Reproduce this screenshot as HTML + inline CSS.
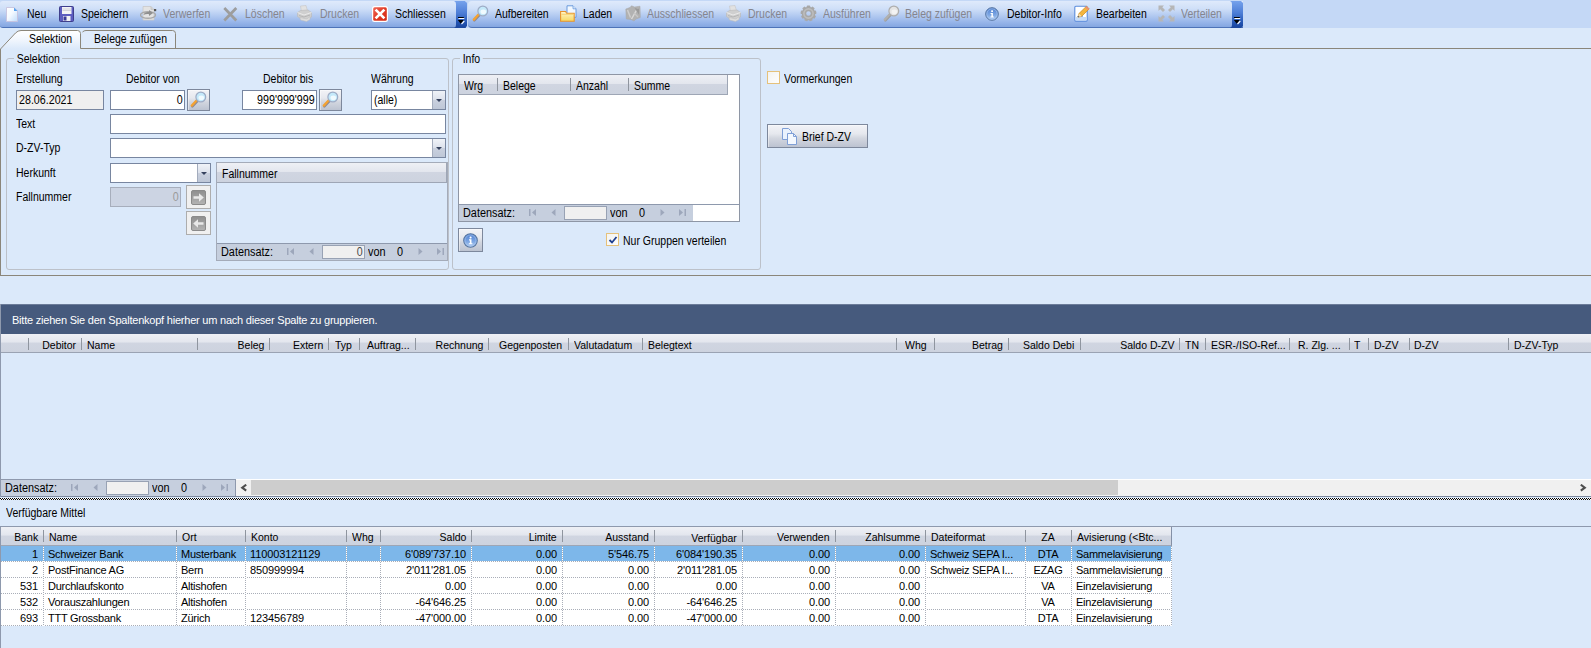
<!DOCTYPE html>
<html lang="de"><head><meta charset="utf-8"><title>Debitoren Zahlungsverkehr</title>
<style>
*{box-sizing:border-box;margin:0;padding:0}
html,body{width:1591px;height:648px;overflow:hidden}
body{background:#dbe9fa;font-family:"Liberation Sans",sans-serif;font-size:12px;color:#000;position:relative;line-height:13px}
span{transform:scaleX(.875);transform-origin:0 0}
span.n{transform:scaleX(.89)}
span.xr{transform-origin:100% 0}
span.xc{transform-origin:50% 0}
.inp span,.ni span{display:inline-block}
.hd span{font-size:11.5px;transform:scaleX(.913)}
.hd span.h12{font-size:12px;transform:scaleX(.875)}
.nav span.t{transform:scaleX(.905)}
span.p{font-size:11px;transform:none;letter-spacing:-.25px}
span.p.n{letter-spacing:-.12px;transform:none}
.a{position:absolute;white-space:nowrap}
.tb{position:absolute;top:0;height:28px;border-bottom:1px solid #4d73b8;border-top:1px solid #c4d8f6;background:linear-gradient(#dfeafb 0%,#cfdff8 30%,#b4cbf1 55%,#93b2e8 85%,#84a6e0 100%);border-radius:3px 0 0 3px}
.tb .t{position:absolute;top:7px;white-space:nowrap}
.tb .d{color:#85858e}
.tb svg{position:absolute}
.ov{position:absolute;top:1px;height:27px;width:11px;background:linear-gradient(#74a0ea 0%,#4f7fd4 45%,#2556b0 80%,#1b469c 100%);border-radius:0 3px 3px 0}
.inp{position:absolute;height:20px;border:1px solid #7886a0;background:#fff;padding:3px 1px 0 2px;white-space:nowrap}
.ro{background:#efefef}
.r{text-align:right}
.btn{position:absolute;border:1px solid #7d889c;background:linear-gradient(#f2f3f7 0%,#e6e8ee 40%,#d2d6df 60%,#bcc3d1 100%);box-shadow:inset 1px 1px 0 rgba(255,255,255,.45)}
.cbtn{position:absolute;right:0;top:0;bottom:0;width:13px;border-left:1px solid #a3acbd;background:linear-gradient(#f0f3f8 0%,#dde2ec 48%,#c9d0de 52%,#bec7d7 100%)}
.cbtn:after{content:"";position:absolute;left:3px;top:8px;border:3px solid transparent;border-top:3px solid #36425e;border-bottom:none}
.gb{position:absolute;border:1px solid #bcc1c9;border-radius:3px}
.gb>span{position:absolute;left:7px;top:-6px;background:#dbe9fa;padding:0 3px}
.hd{position:absolute;background:linear-gradient(#eef0f5 0%,#e3e6ee 45%,#d0d5e1 50%,#cdd3df 100%);border-bottom:1px solid #9ea6b5}
.hd .c{position:absolute;top:0;white-space:nowrap}
.sep{position:absolute;width:1px;background:#8f959f}
.nav{position:absolute;background:#c6cfde;height:17px;border-top:1px solid #8e99ad}
.nav .t{position:absolute;top:2px;white-space:nowrap}
.nav .ni{position:absolute;top:1px;height:14px;border:1px solid #98a2b4;background:#f0f0f0}
.g{fill:#9da7bb}
.row{position:absolute;left:0;width:1171px;height:16px;background:#fff}
.row .c{position:absolute;top:2px;white-space:nowrap}
.fbtn{position:absolute;border:1px solid #adadad;background:#f0f0f0}
.cb{position:absolute;width:13px;height:13px;border:1px solid #e5c17b;background:linear-gradient(135deg,#f3f3f1,#fdfdfd)}
</style></head><body>

<div class="a" style="left:0;top:0;width:1591px;height:28px;background:#c4d8f6"></div>
<div class="tb" style="left:0;width:466px">
<svg style="left:5px;top:5px" width="14" height="16" viewBox="0 0 14 16"><defs><linearGradient id="gn" x1="0" y1="0" x2="1" y2="1"><stop offset="0" stop-color="#fff"/><stop offset=".45" stop-color="#f4f9ff"/><stop offset="1" stop-color="#bfdcfb"/></linearGradient></defs><path d="M1.500 1.500h7.500l3.500 3.500v10.500h-11z" fill="url(#gn)" stroke="#c6c2de" stroke-width=".9"/><path d="M9 1.500l3.500 3.500h-3.500z" fill="#58a2ee"/></svg>
<span class="t" style="left:27px">Neu</span>
<svg style="left:59px;top:4px" width="16" height="17" viewBox="0 0 16 17"><rect x=".5" y="1.500" width="14" height="15" rx="1" fill="#5c5cc0" stroke="#3f3f8c"/><rect x="3" y="2" width="9.500" height="7" fill="#f3f3f6"/><path d="M3.500 4h8.500M3.500 5.500h8.500" stroke="#c9c9d6" stroke-width=".8"/><rect x="4" y="11" width="7.500" height="5" fill="#f0f0f5"/><rect x="4.500" y="11.500" width="3" height="4" fill="#3a3a98"/></svg>
<span class="t" style="left:81px">Speichern</span>
<svg style="left:140px;top:4px" width="17" height="16" viewBox="0 0 17 16"><path d="M3 1.500h8l3 3v10.500h-11z" fill="#e3e3e3" stroke="#c9c9c9" stroke-width=".8"/><path d="M11 1.500v3h3" fill="#d2d2d2" stroke="#bdbdbd" stroke-width=".6"/><ellipse cx="8" cy="10" rx="7.500" ry="3.300" fill="none" stroke="#a9a9a9" stroke-width="1.400"/><path d="M3.500 10c.5-2.500 3-3.500 5.500-3V5l4 3-4 3V9.200c-2-.5-4 0-5.500 .8z" fill="#8f8f8f"/><rect x="14" y="4" width="2.200" height="2.200" fill="#555"/></svg>
<span class="t d" style="left:163px">Verwerfen</span>
<svg style="left:223px;top:6px" width="15" height="15" viewBox="0 0 15 15"><path d="M1.300 1l12 12.500M13.300 1L1.300 13.500" stroke="#9d9d9d" stroke-width="2.700"/></svg>
<span class="t d" style="left:245px">Löschen</span>
<svg style="left:297px;top:4px" width="15" height="17" viewBox="0 0 15 17"><path d="M3.500 1l5.500-.5 1.500 5.500-6 1z" fill="#e2e2e2" stroke="#c6c6c6" stroke-width=".6"/><path d="M.5 7.500l3-2 7.500-.5 3.500 2.500v4.500l-4 3-7-1.500-3-2z" fill="#cfcfcf" stroke="#b9b9b9" stroke-width=".6"/><path d="M.5 7.500l6.500 2.500 7.500-2.500" fill="none" stroke="#e9e9e9" stroke-width="1"/><path d="M3 12.500l7 1.500 3-2.500v3l-3.500 2-6-1.500z" fill="#dcdcdc" stroke="#bdbdbd" stroke-width=".5"/><path d="M2 10.500l5 1.500 6-2" fill="none" stroke="#b0b0b0" stroke-width=".8"/></svg>
<span class="t d" style="left:320px">Drucken</span>
<svg style="left:372px;top:5px" width="16" height="16" viewBox="0 0 16 16"><defs><linearGradient id="gc" x1="0" y1="0" x2="1" y2="1"><stop offset="0" stop-color="#f0685a"/><stop offset=".5" stop-color="#e03a26"/><stop offset="1" stop-color="#d42a12"/></linearGradient></defs><rect x="0" y="0" width="16" height="16" rx="2.500" fill="#fff"/><rect x="1.200" y="1.200" width="13.600" height="13.600" rx="1.500" fill="url(#gc)"/><path d="M3.600 3.600l8.800 8.800M12.400 3.600l-8.800 8.800" stroke="#fff" stroke-width="2.700"/></svg>
<span class="t" style="left:395px">Schliessen</span>
</div><svg class="a" style="left:454px;top:1px" width="13" height="27" viewBox="0 0 13 27"><defs><linearGradient id="go454" x1="0" y1="0" x2="0" y2="1"><stop offset="0" stop-color="#76a2ec"/><stop offset=".45" stop-color="#4c7dd6"/><stop offset=".8" stop-color="#2354b2"/><stop offset="1" stop-color="#1a459c"/></linearGradient></defs><path d="M0 0Q2 .5 2 3V24Q2 26.500 0 27H11L13 25V2L11 0Z" fill="url(#go454)"/><path d="M4 16.500h5.800" stroke="#000" stroke-width="1"/><path d="M4.500 17.500h5.800" stroke="#fff" stroke-width="1"/><path d="M3.800 19h6l-3 3.800z" fill="#000"/><path d="M7.500 23l2.800-3" stroke="#fff" stroke-width="1.100"/></svg>
<div class="tb" style="left:468px;width:775px;border-radius:4px 0 0 4px">
<svg style="left:4px;top:4px" width="17" height="17" viewBox="0 0 17 17"><path d="M2.300 15.300l5-5.300" stroke="#8a8794" stroke-width="2.600" stroke-linecap="round"/><path d="M1.800 14.600l5-5.300" stroke="#f3a233" stroke-width="2.400" stroke-linecap="round"/><circle cx="10.800" cy="6" r="4.900" fill="#c4e9fa" stroke="#9eacc6" stroke-width="1.200"/><ellipse cx="11.300" cy="6.800" rx="2.800" ry="2.300" fill="#ffffff" opacity=".75"/></svg>
<span class="t" style="left:27px">Aufbereiten</span>
<svg style="left:92px;top:4px" width="17" height="17" viewBox="0 0 17 17"><defs><linearGradient id="gf" x1="0" y1="0" x2="0" y2="1"><stop offset="0" stop-color="#fff7cf"/><stop offset="1" stop-color="#f7d75e"/></linearGradient></defs><path d="M7 .8h6l3 3v8.500h-9z" fill="#f2f8ff" stroke="#5e92da" stroke-width=".9"/><path d="M13 .8v3h3" fill="#dbeafc" stroke="#5e92da" stroke-width=".7"/><path d="M.6 6.500h5l1 1.800h7.600v8h-13.600z" fill="url(#gf)" stroke="#e8942c" stroke-width="1.100"/><path d="M1.500 9.300h12" stroke="#f5c860" stroke-width=".8"/></svg>
<span class="t" style="left:115px">Laden</span>
<svg style="left:157px;top:4px" width="16" height="17" viewBox="0 0 16 17"><path d="M.8 4l4.200-1.500 1.500-1.700 3 1.200 5.500-.8.300 11.300-4.300 1.500-2 2-3-1.500-4.700-.5z" fill="#b2b2b2" stroke="#a6a6a6" stroke-width=".5"/><path d="M2.500 5l3 7.500" stroke="#cfcfcf" stroke-width="1.400"/><path d="M12.500 3.500L6.500 14" stroke="#d8d8d8" stroke-width="1.500"/><path d="M9.500 3l4.500 .8v6z" fill="#9a9a9a"/><path d="M9 8l4 4" stroke="#c6c6c6" stroke-width="1.200"/></svg>
<span class="t d" style="left:179px">Ausschliessen</span>
<svg style="left:258px;top:4px" width="15" height="17" viewBox="0 0 15 17"><path d="M3.500 1l5.500-.5 1.500 5.500-6 1z" fill="#e2e2e2" stroke="#c6c6c6" stroke-width=".6"/><path d="M.5 7.500l3-2 7.500-.5 3.500 2.500v4.500l-4 3-7-1.500-3-2z" fill="#cfcfcf" stroke="#b9b9b9" stroke-width=".6"/><path d="M.5 7.500l6.500 2.500 7.500-2.500" fill="none" stroke="#e9e9e9" stroke-width="1"/><path d="M3 12.500l7 1.500 3-2.500v3l-3.500 2-6-1.500z" fill="#dcdcdc" stroke="#bdbdbd" stroke-width=".5"/><path d="M2 10.500l5 1.500 6-2" fill="none" stroke="#b0b0b0" stroke-width=".8"/></svg>
<span class="t d" style="left:280px">Drucken</span>
<svg style="left:332px;top:4px" width="17" height="17" viewBox="0 0 17 17"><g fill="#a9a9a9"><rect x="6.800" y="0.600" width="3.400" height="3.400" rx=".7" transform="rotate(0 8.500 8.500)"/><rect x="6.800" y="0.600" width="3.400" height="3.400" rx=".7" transform="rotate(40 8.500 8.500)"/><rect x="6.800" y="0.600" width="3.400" height="3.400" rx=".7" transform="rotate(80 8.500 8.500)"/><rect x="6.800" y="0.600" width="3.400" height="3.400" rx=".7" transform="rotate(120 8.500 8.500)"/><rect x="6.800" y="0.600" width="3.400" height="3.400" rx=".7" transform="rotate(160 8.500 8.500)"/><rect x="6.800" y="0.600" width="3.400" height="3.400" rx=".7" transform="rotate(200 8.500 8.500)"/><rect x="6.800" y="0.600" width="3.400" height="3.400" rx=".7" transform="rotate(240 8.500 8.500)"/><rect x="6.800" y="0.600" width="3.400" height="3.400" rx=".7" transform="rotate(280 8.500 8.500)"/><rect x="6.800" y="0.600" width="3.400" height="3.400" rx=".7" transform="rotate(320 8.500 8.500)"/></g><circle cx="8.500" cy="8.500" r="4.500" fill="none" stroke="#a8a8a8" stroke-width="4.400"/><circle cx="8.500" cy="8.500" r="4.600" fill="none" stroke="#bdbdbd" stroke-width="1.600"/></svg>
<span class="t d" style="left:355px">Ausführen</span>
<svg style="left:415px;top:4px" width="17" height="17" viewBox="0 0 17 17"><path d="M2.300 15.300l5-5.300" stroke="#9c9c9c" stroke-width="2.600" stroke-linecap="round"/><path d="M1.800 14.600l5-5.300" stroke="#b0b0b0" stroke-width="2.400" stroke-linecap="round"/><circle cx="10.800" cy="6" r="4.900" fill="#e4e4e4" stroke="#adadad" stroke-width="1.200"/><ellipse cx="11.300" cy="6.800" rx="2.800" ry="2.300" fill="#f8f8f8" opacity=".75"/></svg>
<span class="t d" style="left:437px">Beleg zufügen</span>
<svg style="left:517px;top:6px;width:14px;height:14px" width="17" height="17" viewBox="0 0 17 17"><defs><linearGradient id="gi" x1="0" y1="0" x2="0" y2="1"><stop offset="0" stop-color="#4f7fcf"/><stop offset=".55" stop-color="#7aa4e2"/><stop offset="1" stop-color="#b5d0f3"/></linearGradient></defs><circle cx="8.500" cy="8.500" r="7.700" fill="url(#gi)" stroke="#55749f" stroke-width="1.200"/><circle cx="8.500" cy="8.500" r="6.300" fill="none" stroke="#a9c6ee" stroke-width=".9" opacity=".8"/><path d="M6.800 7.200h2.800v4.300h1.100v1.300h-4.100v-1.300h1.200v-3h-1z" fill="#fff"/><rect x="7.500" y="3.900" width="2.200" height="2.200" rx=".7" fill="#fff"/></svg>
<span class="t" style="left:539px">Debitor-Info</span>
<svg style="left:606px;top:4px" width="17" height="17" viewBox="0 0 17 17"><rect x=".8" y="1.300" width="12.400" height="14.800" rx="1" fill="#fff" stroke="#5b8cdc" stroke-width="1.100"/><rect x="1.500" y="12" width="11" height="3.500" fill="#c6dcf8"/><path d="M3 11.500h6" stroke="#8fb4ea" stroke-width="1"/><path d="M4 12.200l.9-3.600 7.600-7.400 2.700 2.700-7.500 7.400z" fill="#f4b63e" stroke="#c9861c" stroke-width=".7"/><path d="M12.500 1.200l2.700 2.700-1.200 1.200-2.700-2.700z" fill="#e98a7e"/><path d="M4 12.200l.9-3.600 2.800 2.700z" fill="#f3dfb6"/><path d="M4 12.200l.4-1.500 1.100 1.100z" fill="#444"/></svg>
<span class="t" style="left:628px">Bearbeiten</span>
<svg style="left:690px;top:4px" width="17" height="17" viewBox="0 0 17 17" fill="#b6b6b6"><path d="M.5 .5h5.500L4.300 2.200 7 5 5 7 2.200 4.300 .5 6z"/><path d="M16.500 .5v5.500l-1.700-1.700L12 7l-2-2 2.800-2.800L11 .5z"/><path d="M.5 16.500v-5.500l1.700 1.700L5 10l2 2-2.800 2.800L6 16.500z"/><path d="M16.500 16.500h-5.500l1.700-1.700L10 12l2-2 2.800 2.800 1.700-1.800z"/></svg>
<span class="t d" style="left:713px">Verteilen</span>
</div><svg class="a" style="left:1230px;top:1px" width="13" height="27" viewBox="0 0 13 27"><defs><linearGradient id="go1230" x1="0" y1="0" x2="0" y2="1"><stop offset="0" stop-color="#76a2ec"/><stop offset=".45" stop-color="#4c7dd6"/><stop offset=".8" stop-color="#2354b2"/><stop offset="1" stop-color="#1a459c"/></linearGradient></defs><path d="M0 0Q2 .5 2 3V24Q2 26.500 0 27H11L13 25V2L11 0Z" fill="url(#go1230)"/><path d="M4 16.500h5.800" stroke="#000" stroke-width="1"/><path d="M4.500 17.500h5.800" stroke="#fff" stroke-width="1"/><path d="M3.800 19h6l-3 3.800z" fill="#000"/><path d="M7.500 23l2.800-3" stroke="#fff" stroke-width="1.100"/></svg>
<svg class="a" style="left:0;top:29px" width="200" height="21" viewBox="0 0 200 21">
<defs><linearGradient id="gt" x1="0" y1="0" x2="0" y2="1"><stop offset="0" stop-color="#fff"/><stop offset=".5" stop-color="#f1f6fd"/><stop offset="1" stop-color="#dbe9fa"/></linearGradient></defs>
<path d="M83 19.500h92.500V4.500q0-3-3-3H86q-2 0-3.500 1.500" fill="#dfebfb" stroke="#8b867a" stroke-width="1"/>
<path d="M0 20L15.500 4q2.500-2.500 5.500-2.500H77.500q3 0 3 3V20z" fill="url(#gt)"/>
<path d="M.5 20L15.500 4q2.500-2.500 5.500-2.500H77.500q3 0 3 3V19.500H200" fill="none" stroke="#8b867a" stroke-width="1"/>
</svg>
<span class="a" style="left:29px;top:33px">Selektion</span><span class="a" style="left:94px;top:33px">Belege zufügen</span>
<div class="a" style="left:0;top:49px;width:1px;height:227px;background:#8b867a"></div>
<div class="a" style="left:180px;top:48px;width:1411px;height:1px;background:#8b867a"></div>
<div class="a" style="left:0;top:275px;width:1591px;height:1px;background:#8b867a"></div>
<div class="gb" style="left:6px;top:58px;width:443px;height:212px"><span>Selektion</span></div>
<div class="gb" style="left:452px;top:58px;width:309px;height:212px"><span>Info</span></div>
<span class="a" style="left:16px;top:73px">Erstellung</span>
<span class="a" style="left:126px;top:73px">Debitor von</span>
<span class="a" style="left:263px;top:73px">Debitor bis</span>
<span class="a" style="left:371px;top:73px">Währung</span>
<span class="a" style="left:16px;top:118px">Text</span>
<span class="a" style="left:16px;top:142px">D-ZV-Typ</span>
<span class="a" style="left:16px;top:167px">Herkunft</span>
<span class="a" style="left:16px;top:191px">Fallnummer</span>
<div class="inp ro" style="left:16px;top:90px;width:88px"><span class="n">28.06.2021</span></div>
<div class="inp r" style="left:110px;top:90px;width:75px"><span class="n xr">0</span></div>
<div class="btn" style="left:187px;top:89px;width:23px;height:22px"><svg style="left:2px;position:absolute;top:1px" width="17" height="17" viewBox="0 0 17 17"><path d="M2.300 15.300l5-5.300" stroke="#8a8794" stroke-width="2.600" stroke-linecap="round"/><path d="M1.800 14.600l5-5.300" stroke="#f3a233" stroke-width="2.400" stroke-linecap="round"/><circle cx="10.800" cy="6" r="4.900" fill="#c4e9fa" stroke="#9eacc6" stroke-width="1.200"/><ellipse cx="11.300" cy="6.800" rx="2.800" ry="2.300" fill="#ffffff" opacity=".75"/></svg></div>
<div class="inp r" style="left:242px;top:90px;width:75px"><span class="n xr">999'999'999</span></div>
<div class="btn" style="left:319px;top:89px;width:23px;height:22px"><svg style="left:2px;position:absolute;top:1px" width="17" height="17" viewBox="0 0 17 17"><path d="M2.300 15.300l5-5.300" stroke="#8a8794" stroke-width="2.600" stroke-linecap="round"/><path d="M1.800 14.600l5-5.300" stroke="#f3a233" stroke-width="2.400" stroke-linecap="round"/><circle cx="10.800" cy="6" r="4.900" fill="#c4e9fa" stroke="#9eacc6" stroke-width="1.200"/><ellipse cx="11.300" cy="6.800" rx="2.800" ry="2.300" fill="#ffffff" opacity=".75"/></svg></div>
<div class="inp" style="left:371px;top:90px;width:75px;padding-left:2px"><span>(alle)</span><div class="cbtn"></div></div>
<div class="inp" style="left:110px;top:114px;width:336px"></div>
<div class="inp" style="left:110px;top:138px;width:336px"><div class="cbtn"></div></div>
<div class="inp" style="left:110px;top:163px;width:101px"><div class="cbtn"></div></div>
<div class="inp r" style="left:110px;top:187px;width:71px;background:#ccd4e3;border-color:#a7aebc;color:#9a9a9a"><span class="n xr">0</span></div>
<div class="fbtn" style="left:186px;top:185px;width:25px;height:24px"><svg class="a" style="left:4px;top:4px" width="15" height="15" viewBox="0 0 15 15"><defs><linearGradient id="ga" x1="0" y1="0" x2="0" y2="1"><stop offset="0" stop-color="#8e8e8e"/><stop offset="1" stop-color="#b4b4b4"/></linearGradient></defs><rect x=".5" y=".5" width="14" height="14" rx="1.500" fill="url(#ga)" stroke="#8b8b8b"/><path d="M2.500 6.300h5.500v-3l4.800 4.200-4.800 4.200v-3h-5.500z" fill="#e9e9e9"/></svg></div>
<div class="fbtn" style="left:186px;top:211px;width:25px;height:24px"><svg class="a" style="left:4px;top:4px" width="15" height="15" viewBox="0 0 15 15"><rect x=".5" y=".5" width="14" height="14" rx="1.500" fill="url(#ga)" stroke="#8b8b8b"/><path d="M12.500 6.300h-5.500v-3l-4.800 4.200 4.800 4.200v-3h5.500z" fill="#e9e9e9"/></svg></div>
<div class="a" style="left:216px;top:162px;width:232px;height:99px;border:1px solid #a4abb9;background:#dbe9fa"></div>
<div class="hd" style="left:217px;top:163px;width:230px;height:20px;border-right:1px solid #9ea6b5"><span class="c h12" style="left:5px;top:5px">Fallnummer</span></div>
<div class="nav" style="left:217px;top:243px;width:230px"><span class="t" style="left:4px">Datensatz:</span><svg class="a" style="left:70px;top:4px" width="8" height="7" viewBox="0 0 8 7"><rect class="g" x="0" y="0" width="1.500" height="7"/><path class="g" d="M7 0v7L3 3.500z"/></svg><svg class="a" style="left:92px;top:4px" width="5" height="7" viewBox="0 0 5 7"><path class="g" d="M4.500 0v7L.5 3.500z"/></svg><div class="ni" style="left:105px;width:43px;text-align:right;color:#4a4a4a;line-height:12px;padding-right:1px"><span class="n xr">0</span></div><span class="t" style="left:151px">von</span><span class="t" style="left:180px">0</span><svg class="a" style="left:201px;top:4px" width="5" height="7" viewBox="0 0 5 7"><path class="g" d="M.5 0v7L4.500 3.500z"/></svg><svg class="a" style="left:219px;top:4px" width="8" height="7" viewBox="0 0 8 7"><path class="g" d="M1 0v7L5 3.500z"/><rect class="g" x="6.500" y="0" width="1.500" height="7"/></svg></div>
<div class="a" style="left:458px;top:74px;width:282px;height:148px;border:1px solid #8e96a5;background:#fff"></div>
<div class="hd" style="left:459px;top:75px;width:269px;height:20px;border-right:1px solid #9ea6b5">
<span class="c h12" style="left:5px;top:5px">Wrg</span>
<span class="c h12" style="left:44px;top:5px">Belege</span>
<span class="c h12" style="left:117px;top:5px">Anzahl</span>
<span class="c h12" style="left:175px;top:5px">Summe</span>
<div class="sep" style="left:38px;top:3px;height:13px"></div>
<div class="sep" style="left:111px;top:3px;height:13px"></div>
<div class="sep" style="left:169px;top:3px;height:13px"></div>
</div>
<div class="a" style="left:459px;top:204px;width:280px;height:1px;background:#8e99ad"></div>
<div class="nav" style="left:459px;top:204px;width:234px"><span class="t" style="left:4px">Datensatz:</span><svg class="a" style="left:70px;top:4px" width="8" height="7" viewBox="0 0 8 7"><rect class="g" x="0" y="0" width="1.500" height="7"/><path class="g" d="M7 0v7L3 3.500z"/></svg><svg class="a" style="left:92px;top:4px" width="5" height="7" viewBox="0 0 5 7"><path class="g" d="M4.500 0v7L.5 3.500z"/></svg><div class="ni" style="left:105px;width:43px;text-align:right;color:#4a4a4a;line-height:12px;padding-right:1px"><span class="n xr"></span></div><span class="t" style="left:151px">von</span><span class="t" style="left:180px">0</span><svg class="a" style="left:201px;top:4px" width="5" height="7" viewBox="0 0 5 7"><path class="g" d="M.5 0v7L4.500 3.500z"/></svg><svg class="a" style="left:219px;top:4px" width="8" height="7" viewBox="0 0 8 7"><path class="g" d="M1 0v7L5 3.500z"/><rect class="g" x="6.500" y="0" width="1.500" height="7"/></svg></div>
<div class="btn" style="left:458px;top:228px;width:25px;height:24px"><svg style="left:4px;position:absolute;top:4px;width:15px;height:15px" width="17" height="17" viewBox="0 0 17 17"><defs><linearGradient id="gi" x1="0" y1="0" x2="0" y2="1"><stop offset="0" stop-color="#4f7fcf"/><stop offset=".55" stop-color="#7aa4e2"/><stop offset="1" stop-color="#b5d0f3"/></linearGradient></defs><circle cx="8.500" cy="8.500" r="7.700" fill="url(#gi)" stroke="#55749f" stroke-width="1.200"/><circle cx="8.500" cy="8.500" r="6.300" fill="none" stroke="#a9c6ee" stroke-width=".9" opacity=".8"/><path d="M6.800 7.200h2.800v4.300h1.100v1.300h-4.100v-1.300h1.200v-3h-1z" fill="#fff"/><rect x="7.500" y="3.900" width="2.200" height="2.200" rx=".7" fill="#fff"/></svg></div>
<div class="cb" style="left:606px;top:233px"><svg class="a" style="left:1px;top:1px" width="10" height="10" viewBox="0 0 10 10"><path d="M1.500 5l2.500 2.500 4.500-5.500" fill="none" stroke="#1f3f8f" stroke-width="1.800"/></svg></div>
<span class="a" style="left:623px;top:235px">Nur Gruppen verteilen</span>
<div class="cb" style="left:767px;top:71px"></div>
<span class="a" style="left:784px;top:73px">Vormerkungen</span>
<div class="btn" style="left:767px;top:124px;width:101px;height:24px"><svg class="a" style="left:13px;top:2px" width="18" height="19" viewBox="0 0 18 19"><path d="M1.500 1.500h6l3 3v8h-9z" fill="#eaf2fd" stroke="#7f9fd6"/><path d="M6.500 6.500h6l3 3v8h-9z" fill="#f4f8fe" stroke="#7f9fd6"/><path d="M12.500 6.500v3h3" fill="none" stroke="#7f9fd6"/></svg><span class="a" style="left:34px;top:6px">Brief D-ZV</span></div>
<div class="a" style="left:0;top:304px;width:1591px;height:30px;background:#465a7d;color:#fff;border-left:1px solid #8e99ad;border-top:1px solid #6c7c99"><span class="a p" style="left:11px;top:9px;letter-spacing:-.22px">Bitte ziehen Sie den Spaltenkopf hierher um nach dieser Spalte zu gruppieren.</span></div>
<div class="hd" style="left:0;top:334px;width:1591px;height:19px;border-bottom:1px solid #9aa3b3">
<div class="sep" style="left:28px;top:4px;height:12px"></div>
<div class="sep" style="left:81px;top:4px;height:12px"></div>
<div class="sep" style="left:197px;top:4px;height:12px"></div>
<div class="sep" style="left:269px;top:4px;height:12px"></div>
<div class="sep" style="left:328px;top:4px;height:12px"></div>
<div class="sep" style="left:359px;top:4px;height:12px"></div>
<div class="sep" style="left:415px;top:4px;height:12px"></div>
<div class="sep" style="left:488px;top:4px;height:12px"></div>
<div class="sep" style="left:568px;top:4px;height:12px"></div>
<div class="sep" style="left:642px;top:4px;height:12px"></div>
<div class="sep" style="left:896px;top:4px;height:12px"></div>
<div class="sep" style="left:934px;top:4px;height:12px"></div>
<div class="sep" style="left:1008px;top:4px;height:12px"></div>
<div class="sep" style="left:1080px;top:4px;height:12px"></div>
<div class="sep" style="left:1179px;top:4px;height:12px"></div>
<div class="sep" style="left:1205px;top:4px;height:12px"></div>
<div class="sep" style="left:1289px;top:4px;height:12px"></div>
<div class="sep" style="left:1349px;top:4px;height:12px"></div>
<div class="sep" style="left:1368px;top:4px;height:12px"></div>
<div class="sep" style="left:1409px;top:4px;height:12px"></div>
<div class="sep" style="left:1508px;top:4px;height:12px"></div>
<span class="c" style="left:87px;top:5px">Name</span>
<span class="c" style="left:335px;top:5px">Typ</span>
<span class="c" style="left:367px;top:5px">Auftrag...</span>
<span class="c" style="left:499px;top:5px">Gegenposten</span>
<span class="c" style="left:574px;top:5px">Valutadatum</span>
<span class="c" style="left:648px;top:5px">Belegtext</span>
<span class="c" style="left:905px;top:5px">Whg</span>
<span class="c" style="left:1185px;top:5px">TN</span>
<span class="c" style="left:1211px;top:5px">ESR-/ISO-Ref...</span>
<span class="c" style="left:1298px;top:5px">R. Zlg. ...</span>
<span class="c" style="left:1354px;top:5px">T</span>
<span class="c" style="left:1374px;top:5px">D-ZV</span>
<span class="c" style="left:1414px;top:5px">D-ZV</span>
<span class="c" style="left:1514px;top:5px">D-ZV-Typ</span>
<span class="c xr" style="right:1515px;top:5px">Debitor</span>
<span class="c xr" style="right:1327px;top:5px">Beleg</span>
<span class="c xr" style="right:1268px;top:5px">Extern</span>
<span class="c xr" style="right:1108px;top:5px">Rechnung</span>
<span class="c xr" style="right:588px;top:5px">Betrag</span>
<span class="c xr" style="right:517px;top:5px">Saldo Debi</span>
<span class="c xr" style="right:417px;top:5px">Saldo D-ZV</span>
</div>
<div class="a" style="left:0;top:304px;width:1px;height:193px;background:#8e99ad;z-index:3"></div>
<div class="nav" style="border-left:1px solid #8e99ad;border-right:1px solid #8e99ad;left:0px;top:479px;width:236px"><span class="t" style="left:4px">Datensatz:</span><svg class="a" style="left:70px;top:4px" width="8" height="7" viewBox="0 0 8 7"><rect class="g" x="0" y="0" width="1.500" height="7"/><path class="g" d="M7 0v7L3 3.500z"/></svg><svg class="a" style="left:92px;top:4px" width="5" height="7" viewBox="0 0 5 7"><path class="g" d="M4.500 0v7L.5 3.500z"/></svg><div class="ni" style="left:105px;width:43px;text-align:right;color:#4a4a4a;line-height:12px;padding-right:1px"><span class="n xr"></span></div><span class="t" style="left:151px">von</span><span class="t" style="left:180px">0</span><svg class="a" style="left:201px;top:4px" width="5" height="7" viewBox="0 0 5 7"><path class="g" d="M.5 0v7L4.500 3.500z"/></svg><svg class="a" style="left:219px;top:4px" width="8" height="7" viewBox="0 0 8 7"><path class="g" d="M1 0v7L5 3.500z"/><rect class="g" x="6.500" y="0" width="1.500" height="7"/></svg></div>
<div class="a" style="left:236px;top:479px;width:1355px;height:17px;background:#f0f0f0;border-top:1px solid #fff"><div class="a" style="left:15px;top:0;width:867px;height:15px;background:#cdcdcd"></div>
<svg class="a" style="left:4px;top:4px" width="8" height="8" viewBox="0 0 8 8"><path d="M6.200 .7L2.200 3.700l4 3" fill="none" stroke="#4d4d4d" stroke-width="2.100"/></svg>
<svg class="a" style="left:1343px;top:4px" width="8" height="8" viewBox="0 0 8 8"><path d="M1.800 .7L5.800 3.700l-4 3" fill="none" stroke="#4d4d4d" stroke-width="2.100"/></svg></div>
<div class="a" style="left:0;top:496px;width:1591px;height:1px;background:#7f8a9e"></div>
<div class="a" style="left:0;top:498px;width:1591px;height:1px;background-image:repeating-linear-gradient(90deg,#000 0 1px,#fff 1px 2px)"></div>
<div class="a" style="left:0;top:499px;width:1591px;height:1px;background-image:repeating-linear-gradient(90deg,#fff 0 1px,#000 1px 2px)"></div>
<span class="a" style="left:6px;top:507px">Verfügbare Mittel</span>
<div class="a" style="left:0;top:526px;width:1591px;height:1px;background:#8e99ad"></div>
<div class="a" style="left:0;top:527px;width:1px;height:121px;background:#8e99ad;z-index:3"></div>
<div class="hd" style="left:0;top:527px;width:1172px;height:19px;border-right:1px solid #8490a6">
<span class="c xr" style="right:1133px;top:4px">Bank</span>
<div class="sep" style="left:43px;top:3px;height:12px"></div>
<span class="c" style="left:48.5px;top:4px">Name</span>
<div class="sep" style="left:176px;top:3px;height:12px"></div>
<span class="c" style="left:181.5px;top:4px">Ort</span>
<div class="sep" style="left:245px;top:3px;height:12px"></div>
<span class="c" style="left:250.5px;top:4px">Konto</span>
<div class="sep" style="left:346px;top:3px;height:12px"></div>
<span class="c" style="left:351.5px;top:4px">Whg</span>
<div class="sep" style="left:380px;top:3px;height:12px"></div>
<span class="c xr" style="right:705px;top:4px">Saldo</span>
<div class="sep" style="left:471px;top:3px;height:12px"></div>
<span class="c xr" style="right:614px;top:4px">Limite</span>
<div class="sep" style="left:562px;top:3px;height:12px"></div>
<span class="c xr" style="right:522px;top:4px">Ausstand</span>
<div class="sep" style="left:654px;top:3px;height:12px"></div>
<span class="c xr" style="right:434px;top:5px">Verfügbar</span>
<div class="sep" style="left:742px;top:3px;height:12px"></div>
<span class="c xr" style="right:341px;top:4px">Verwenden</span>
<div class="sep" style="left:835px;top:3px;height:12px"></div>
<span class="c xr" style="right:251px;top:4px">Zahlsumme</span>
<div class="sep" style="left:925px;top:3px;height:12px"></div>
<span class="c" style="left:930.5px;top:4px">Dateiformat</span>
<div class="sep" style="left:1025px;top:3px;height:12px"></div>
<span class="c xc" style="left:1025px;width:46px;text-align:center;top:4px">ZA</span>
<div class="sep" style="left:1071px;top:3px;height:12px"></div>
<span class="c" style="left:1076.5px;top:4px">Avisierung (&lt;Btc...</span>
</div>
<div class="row" style="top:546px;background:#7db7ea;">
<span class="c p n" style="right:1133px">1</span>
<span class="c p" style="left:48px">Schweizer Bank</span>
<span class="c p" style="left:181px">Musterbank</span>
<span class="c p n" style="left:250px">110003121129</span>
<span class="c p n" style="right:705px">6'089'737.10</span>
<span class="c p n" style="right:614px">0.00</span>
<span class="c p n" style="right:522px">5'546.75</span>
<span class="c p n" style="right:434px">6'084'190.35</span>
<span class="c p n" style="right:341px">0.00</span>
<span class="c p n" style="right:251px">0.00</span>
<span class="c p" style="left:930px">Schweiz SEPA I...</span>
<span class="c p" style="left:1025px;width:46px;text-align:center">DTA</span>
<span class="c p" style="left:1076px">Sammelavisierung</span>
</div>
<div class="row" style="top:562px;">
<span class="c p n" style="right:1133px">2</span>
<span class="c p" style="left:48px">PostFinance AG</span>
<span class="c p" style="left:181px">Bern</span>
<span class="c p n" style="left:250px">850999994</span>
<span class="c p n" style="right:705px">2'011'281.05</span>
<span class="c p n" style="right:614px">0.00</span>
<span class="c p n" style="right:522px">0.00</span>
<span class="c p n" style="right:434px">2'011'281.05</span>
<span class="c p n" style="right:341px">0.00</span>
<span class="c p n" style="right:251px">0.00</span>
<span class="c p" style="left:930px">Schweiz SEPA I...</span>
<span class="c p" style="left:1025px;width:46px;text-align:center">EZAG</span>
<span class="c p" style="left:1076px">Sammelavisierung</span>
</div>
<div class="row" style="top:578px;">
<span class="c p n" style="right:1133px">531</span>
<span class="c p" style="left:48px">Durchlaufskonto</span>
<span class="c p" style="left:181px">Altishofen</span>
<span class="c p n" style="right:705px">0.00</span>
<span class="c p n" style="right:614px">0.00</span>
<span class="c p n" style="right:522px">0.00</span>
<span class="c p n" style="right:434px">0.00</span>
<span class="c p n" style="right:341px">0.00</span>
<span class="c p n" style="right:251px">0.00</span>
<span class="c p" style="left:1025px;width:46px;text-align:center">VA</span>
<span class="c p" style="left:1076px">Einzelavisierung</span>
</div>
<div class="row" style="top:594px;">
<span class="c p n" style="right:1133px">532</span>
<span class="c p" style="left:48px">Vorauszahlungen</span>
<span class="c p" style="left:181px">Altishofen</span>
<span class="c p n" style="right:705px">-64'646.25</span>
<span class="c p n" style="right:614px">0.00</span>
<span class="c p n" style="right:522px">0.00</span>
<span class="c p n" style="right:434px">-64'646.25</span>
<span class="c p n" style="right:341px">0.00</span>
<span class="c p n" style="right:251px">0.00</span>
<span class="c p" style="left:1025px;width:46px;text-align:center">VA</span>
<span class="c p" style="left:1076px">Einzelavisierung</span>
</div>
<div class="row" style="top:610px;">
<span class="c p n" style="right:1133px">693</span>
<span class="c p" style="left:48px">TTT Grossbank</span>
<span class="c p" style="left:181px">Zürich</span>
<span class="c p n" style="left:250px">123456789</span>
<span class="c p n" style="right:705px">-47'000.00</span>
<span class="c p n" style="right:614px">0.00</span>
<span class="c p n" style="right:522px">0.00</span>
<span class="c p n" style="right:434px">-47'000.00</span>
<span class="c p n" style="right:341px">0.00</span>
<span class="c p n" style="right:251px">0.00</span>
<span class="c p" style="left:1025px;width:46px;text-align:center">DTA</span>
<span class="c p" style="left:1076px">Einzelavisierung</span>
</div>
<svg class="a" style="left:0;top:546px" width="1172" height="81" viewBox="0 0 1172 81" shape-rendering="crispEdges">
<path d="M1 15.5H1172" stroke="#fff" stroke-width="1"/><path d="M1 15.5H1172" stroke="#a9aeb8" stroke-width="1" stroke-dasharray="1 1"/>
<path d="M1 31.5H1172" stroke="#fff" stroke-width="1"/><path d="M1 31.5H1172" stroke="#a9aeb8" stroke-width="1" stroke-dasharray="1 1"/>
<path d="M1 47.5H1172" stroke="#fff" stroke-width="1"/><path d="M1 47.5H1172" stroke="#a9aeb8" stroke-width="1" stroke-dasharray="1 1"/>
<path d="M1 63.5H1172" stroke="#fff" stroke-width="1"/><path d="M1 63.5H1172" stroke="#a9aeb8" stroke-width="1" stroke-dasharray="1 1"/>
<path d="M1 79.5H1172" stroke="#fff" stroke-width="1"/><path d="M1 79.5H1172" stroke="#a9aeb8" stroke-width="1" stroke-dasharray="1 1"/>
<path d="M43.5 0V80" stroke="#fff" stroke-width="1"/><path d="M43.5 0V80" stroke="#a9aeb8" stroke-width="1" stroke-dasharray="1 1"/>
<path d="M176.5 0V80" stroke="#fff" stroke-width="1"/><path d="M176.5 0V80" stroke="#a9aeb8" stroke-width="1" stroke-dasharray="1 1"/>
<path d="M245.5 0V80" stroke="#fff" stroke-width="1"/><path d="M245.5 0V80" stroke="#a9aeb8" stroke-width="1" stroke-dasharray="1 1"/>
<path d="M346.5 0V80" stroke="#fff" stroke-width="1"/><path d="M346.5 0V80" stroke="#a9aeb8" stroke-width="1" stroke-dasharray="1 1"/>
<path d="M380.5 0V80" stroke="#fff" stroke-width="1"/><path d="M380.5 0V80" stroke="#a9aeb8" stroke-width="1" stroke-dasharray="1 1"/>
<path d="M471.5 0V80" stroke="#fff" stroke-width="1"/><path d="M471.5 0V80" stroke="#a9aeb8" stroke-width="1" stroke-dasharray="1 1"/>
<path d="M562.5 0V80" stroke="#fff" stroke-width="1"/><path d="M562.5 0V80" stroke="#a9aeb8" stroke-width="1" stroke-dasharray="1 1"/>
<path d="M654.5 0V80" stroke="#fff" stroke-width="1"/><path d="M654.5 0V80" stroke="#a9aeb8" stroke-width="1" stroke-dasharray="1 1"/>
<path d="M742.5 0V80" stroke="#fff" stroke-width="1"/><path d="M742.5 0V80" stroke="#a9aeb8" stroke-width="1" stroke-dasharray="1 1"/>
<path d="M835.5 0V80" stroke="#fff" stroke-width="1"/><path d="M835.5 0V80" stroke="#a9aeb8" stroke-width="1" stroke-dasharray="1 1"/>
<path d="M925.5 0V80" stroke="#fff" stroke-width="1"/><path d="M925.5 0V80" stroke="#a9aeb8" stroke-width="1" stroke-dasharray="1 1"/>
<path d="M1025.5 0V80" stroke="#fff" stroke-width="1"/><path d="M1025.5 0V80" stroke="#a9aeb8" stroke-width="1" stroke-dasharray="1 1"/>
<path d="M1071.5 0V80" stroke="#fff" stroke-width="1"/><path d="M1071.5 0V80" stroke="#a9aeb8" stroke-width="1" stroke-dasharray="1 1"/>
<path d="M1171.5 0V80" stroke="#fff" stroke-width="1"/><path d="M1171.5 0V80" stroke="#a9aeb8" stroke-width="1" stroke-dasharray="1 1"/>
</svg>
</body></html>
